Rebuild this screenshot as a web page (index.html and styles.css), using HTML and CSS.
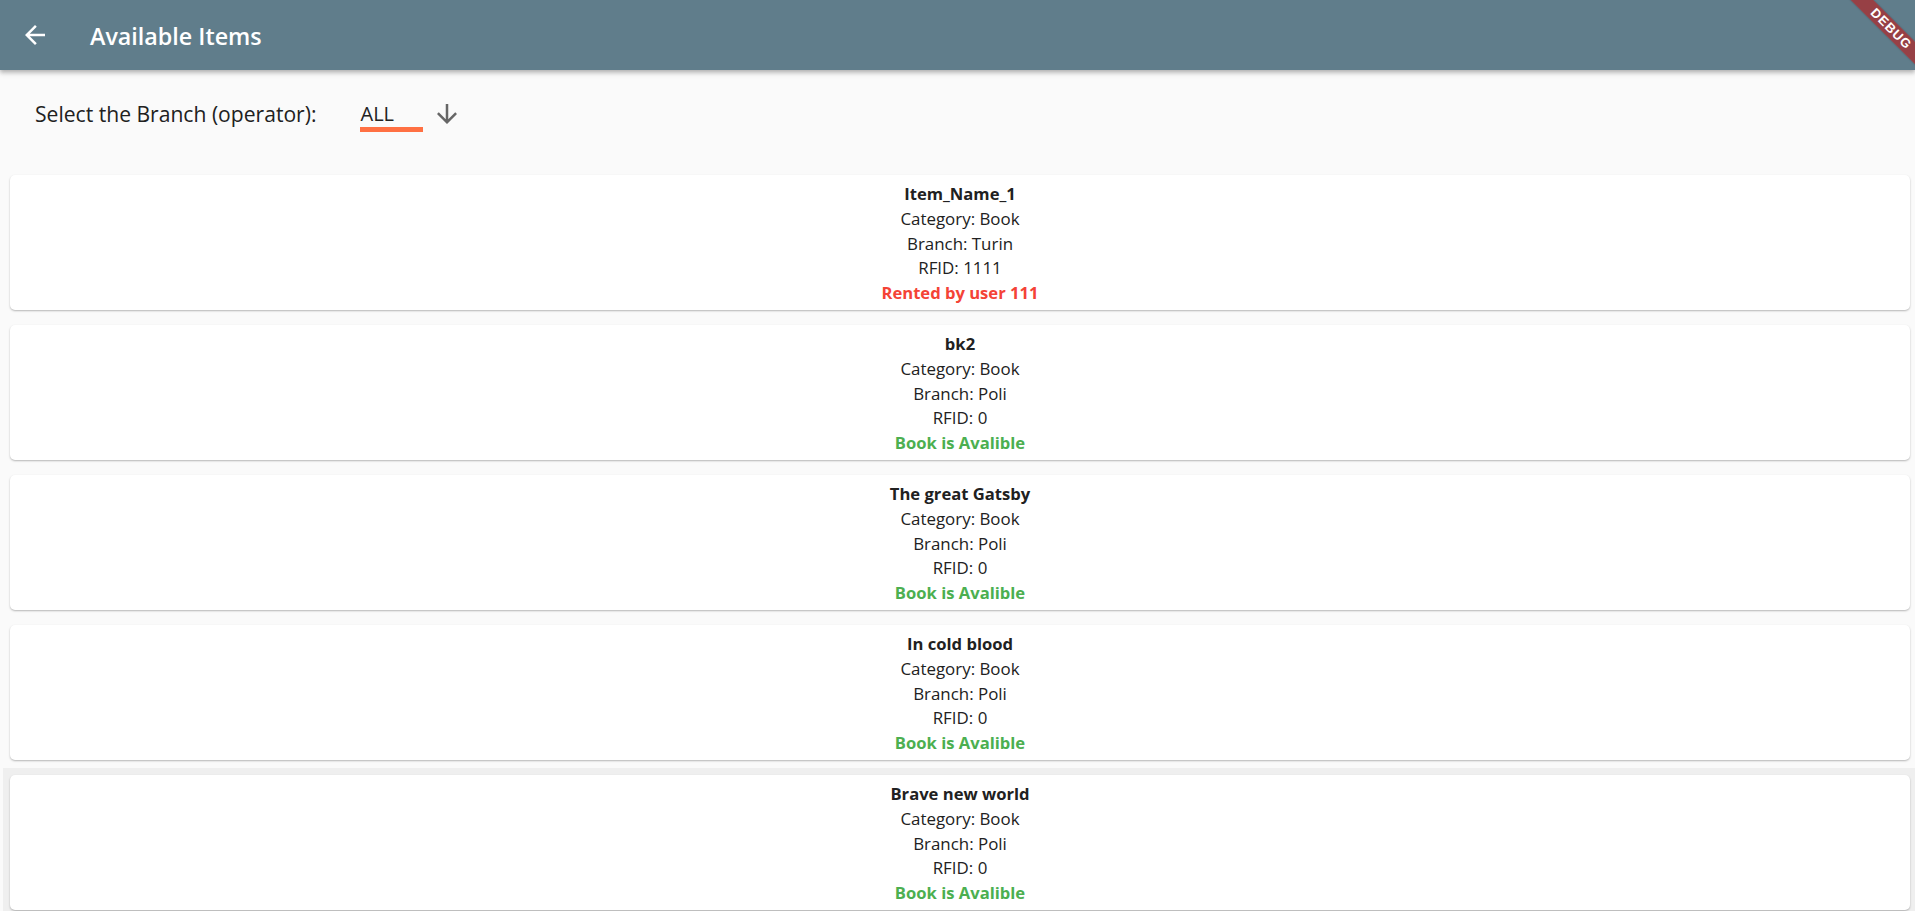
FILE: index.html
```html
<!DOCTYPE html>
<html lang="en">
<head>
<meta charset="utf-8">
<title>Available Items</title>
<link rel="stylesheet" href="styles.css">
</head>
<body>
<header class="appbar">
  <button class="back" aria-label="Back">
    <svg viewBox="0 0 24 24" width="30" height="30"><path fill="#fff" d="M20 11H7.83l5.59-5.59L12 4l-8 8 8 8 1.41-1.41L7.83 13H20v-2z"/></svg>
  </button>
  <h1 class="title">Available Items</h1>
  <div class="banner-clip"><div class="debug-banner">DEBUG</div></div>
</header>
<main class="content">
  <div class="branch-row">
    <span class="branch-label">Select the Branch (operator):</span>
    <div class="dropdown">
      <span class="dropdown-value">ALL</span>
      <svg class="dropdown-icon" viewBox="0 0 24 24" width="30" height="30"><path fill="#666" d="M20 12l-1.41-1.41L13 16.17V4h-2v12.17l-5.58-5.59L4 12l8 8 8-8z"/></svg>
    </div>
  </div>
  <ul class="items">
    <li class="item"><div class="card">
      <p class="name">Item_Name_1</p>
      <p>Category: Book</p>
      <p>Branch: Turin</p>
      <p>RFID: 1111</p>
      <p class="status rented">Rented by user 111</p>
    </div></li>
    <li class="item"><div class="card">
      <p class="name">bk2</p>
      <p>Category: Book</p>
      <p>Branch: Poli</p>
      <p>RFID: 0</p>
      <p class="status available">Book is Avalible</p>
    </div></li>
    <li class="item"><div class="card">
      <p class="name">The great Gatsby</p>
      <p>Category: Book</p>
      <p>Branch: Poli</p>
      <p>RFID: 0</p>
      <p class="status available">Book is Avalible</p>
    </div></li>
    <li class="item"><div class="card">
      <p class="name">In cold blood</p>
      <p>Category: Book</p>
      <p>Branch: Poli</p>
      <p>RFID: 0</p>
      <p class="status available">Book is Avalible</p>
    </div></li>
    <li class="item is-hovered"><div class="card">
      <p class="name">Brave new world</p>
      <p>Category: Book</p>
      <p>Branch: Poli</p>
      <p>RFID: 0</p>
      <p class="status available">Book is Avalible</p>
    </div></li>
  </ul>
</main>
</body>
</html>
```

FILE: styles.css
```css
* { box-sizing: border-box; }
html, body { margin: 0; padding: 0; }
body {
  background: #fafafa;
  font-family: "Open Sans", "Noto Sans", sans-serif;
  color: #212121;
  overflow: hidden;
  height: 911px;
}
.appbar {
  position: relative;
  z-index: 2;
  height: 70px;
  background: #607d8b;
  display: flex;
  align-items: center;
  padding-left: 20px;
  box-shadow: 0 2px 4px rgba(0,0,0,0.22), 0 4px 5px rgba(0,0,0,0.10);
}
.back {
  width: 30px;
  height: 30px;
  padding: 0;
  border: 0;
  background: none;
  display: flex;
}
.title {
  margin: 2px 0 0 40px;
  font-size: 23.3px;
  font-weight: 600;
  color: #fff;
  line-height: 30px;
}
.banner-clip {
  position: absolute;
  top: 0;
  right: 0;
  width: 80px;
  height: 80px;
  overflow: hidden;
}
.debug-banner {
  position: absolute;
  width: 130px;
  height: 16px;
  left: -9px;
  top: 20.5px;
  transform: rotate(45deg);
  background: rgba(183, 28, 28, 0.63);
  color: #fff;
  font-family: "Liberation Sans", sans-serif;
  font-weight: 700;
  font-size: 13px;
  line-height: 16px;
  text-align: center;
  letter-spacing: 1px;
  box-shadow: 0 0 2px rgba(0,0,0,0.25);
}
.content { display: flex; flex-direction: column; }
.branch-row {
  display: flex;
  align-items: flex-start;
  padding: 28px 0 0 35px;
  height: 97.5px;
}
.branch-label {
  font-size: 21.1px;
  line-height: 30px;
  padding-top: 1px;
  color: #212121;
}
.dropdown {
  display: flex;
  align-items: flex-start;
  margin-left: 44px;
}
.dropdown-value {
  width: 63px;
  font-size: 20px;
  line-height: 30px;
  padding-top: 1px;
  height: 34px;
  color: #212121;
  border-bottom: 5px solid #ff7043;
}
.dropdown-icon { margin-left: 8.5px; margin-top: 1px; }
.items {
  list-style: none;
  margin: 0;
  padding: 0 0 0 2.5px;
}
.item {
  padding: 7.5px 5px 7.5px 7.5px;
}
.item.is-hovered { background: #efefef; }
.card {
  background: #fff;
  border-radius: 5px;
  box-shadow: 0 1px 2px rgba(0,0,0,0.28);
  padding: 7px 0 4.25px;
  text-align: center;
}
.card p {
  margin: 0;
  font-size: 16.9px;
  line-height: 24.75px;
  color: #212121;
}
.card .name { font-weight: 700; font-size: 16.6px; }
.card .status { font-weight: 700; font-size: 16.6px; }
.card .rented { color: #f44336; }
.card .available { color: #4caf50; }
```
